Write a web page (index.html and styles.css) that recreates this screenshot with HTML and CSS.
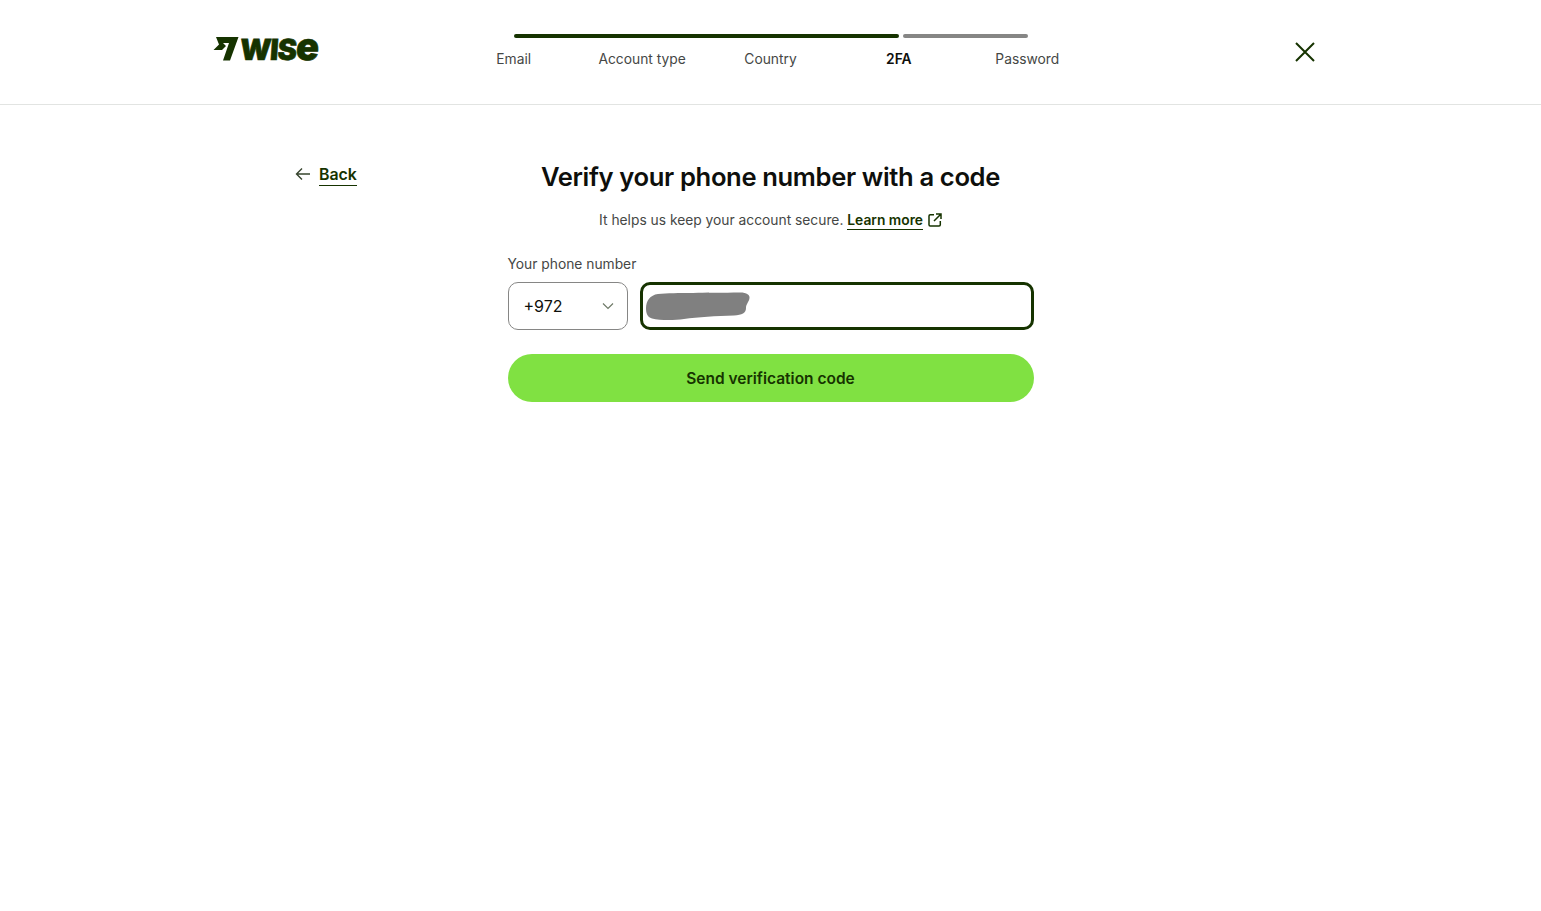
FILE: index.html
```html
<!DOCTYPE html>
<html>
<head>
    <meta charset="UTF-8">
    <meta name="viewport" content="width=device-width, initial-scale=1.0">
    <title>Wise</title>
    <link rel="stylesheet" href="styles.css">
</head>
<body>
    <header class="topbar">
        <a class="logo" href="#">
            <svg class="logo-flag" width="26" height="25" viewBox="0 0 26 25">
                <path d="M3 1H25.5L17 24.5H10L16 7H10L13 10L9 14H0.5L6 8.5Z" fill="#163300"/>
            </svg>
            <span class="logo-word">WIS<span class="logo-e">e</span></span>
        </a>

        <div class="stepper">
            <div class="bars">
                <div class="bar bar-done"></div>
                <div class="bar bar-todo"></div>
            </div>
            <div class="steps">
                <span>Email</span>
                <span>Account type</span>
                <span>Country</span>
                <span class="current">2FA</span>
                <span>Password</span>
            </div>
        </div>

        <button class="close" aria-label="Close">
            <svg width="20" height="20" viewBox="0 0 20 20">
                <path d="M1 1L19 19M19 1L1 19" stroke="#163300" stroke-width="2" fill="none"/>
            </svg>
        </button>
    </header>

    <main class="page">
        <div class="back-col">
            <a class="back" href="#">
                <svg class="back-arrow" width="16" height="14" viewBox="0 0 16 14">
                    <path d="M15 7H2M7 1.5L1.5 7L7 12.5" stroke="#37452e" stroke-width="1.4" fill="none"/>
                </svg>
                <span class="link">Back</span>
            </a>
        </div>

        <div class="form">
            <h1>Verify your phone number with a code</h1>
            <p class="sub">It helps us keep your account secure. <a class="link" href="#">Learn more</a>
                <svg class="ext" width="14" height="14" viewBox="0 0 14 14">
                    <path d="M6 1.7H2.2C1.5 1.7 1 2.2 1 2.9V11.8C1 12.5 1.5 13 2.2 13H11.1C11.8 13 12.3 12.5 12.3 11.8V8M8 1H13V6M13 1L6 8" stroke="#163300" stroke-width="1.5" fill="none"/>
                </svg>
            </p>

            <label class="field-label">Your phone number</label>
            <div class="phone-row">
                <div class="select">
                    <span>+972</span>
                    <svg width="12" height="8" viewBox="0 0 12 8">
                        <path d="M1 1.5L6 6.5L11 1.5" stroke="#6f7a68" stroke-width="1.2" fill="none"/>
                    </svg>
                </div>
                <div class="phone-input">
                    <svg class="scribble" width="104" height="29" viewBox="0 0 104 29">
                        <path d="M12 2C30 0.5 60 1 94 0.5C101 0.5 104 3 103.5 6C103 10 100 12 100 16C100 21 96 23 88 23.5C70 24 52 25 38 27C28 28.5 14 28.5 6 26.5C1 25 0 21 0 16C0 9 4 3 12 2Z" fill="#808080"/>
                    </svg>
                </div>
            </div>

            <button class="send">Send verification code</button>
        </div>
    </main>
</body>
</html>
```

FILE: styles.css
```css
body {
    margin: 0;
    background: #fff;
    font-family: Inter, "Liberation Sans", sans-serif;
    color: #454745;
}

.topbar {
    display: grid;
    grid-template-columns: 1fr 642px 1fr;
    height: 104px;
    padding: 0 213px;
    border-bottom: 1px solid #e2e4e2;
}

.logo {
    display: flex;
    align-items: flex-start;
    gap: 1px;
    padding-top: 32px;
    text-decoration: none;
    color: #163300;
}

.logo-flag {
    margin-top: 4px;
}

.logo-word {
    font-size: 29px;
    line-height: 28px;
    font-weight: 900;
    letter-spacing: -1px;
    -webkit-text-stroke: 0.6px #163300;
    transform: skewX(-4deg);
}

.logo-e {
    font-size: 38px;
    letter-spacing: 0;
}

.stepper {
    padding-top: 34px;
}

.bars {
    display: flex;
    gap: 4px;
    margin: 0 64px;
}

.bar {
    height: 4px;
    border-radius: 2px;
}

.bar-done {
    width: 385px;
    background: #163300;
}

.bar-todo {
    width: 125px;
    background: #868685;
}

.steps {
    display: grid;
    grid-template-columns: repeat(5, 128.4px);
    margin-top: 12px;
    font-size: 13.8px;
    line-height: 18px;
    text-align: center;
    white-space: nowrap;
}

.steps .current {
    color: #0e0f0c;
    font-weight: 600;
}

.close {
    justify-self: end;
    align-self: start;
    margin: 42px 13px 0 0;
    padding: 0;
    border: 0;
    background: none;
    line-height: 0;
}

.page {
    display: grid;
    grid-template-columns: 1fr 526px 1fr;
    padding-top: 55px;
}

.back-col {
    padding: 5px 0 0 295px;
}

.back {
    display: flex;
    align-items: center;
    gap: 8px;
    font-size: 15.9px;
    line-height: 20px;
    font-weight: 600;
    text-decoration: none;
}

.back-arrow {
    margin-top: -3px;
}

.back .link {
    padding-bottom: 0;
}

.link {
    color: #163300;
    font-weight: 600;
    text-decoration: none;
    border-bottom: 1px solid #163300;
    padding-bottom: 1px;
}

.form {
    display: flex;
    flex-direction: column;
}

h1 {
    margin: 0;
    font-size: 25.6px;
    line-height: 34px;
    font-weight: 600;
    letter-spacing: -0.36px;
    color: #0e0f0c;
    text-align: center;
}

.sub {
    margin: 16px 0 0;
    font-size: 13.8px;
    line-height: 20px;
    text-align: center;
}

.ext {
    margin-left: 1px;
    vertical-align: -2px;
}

.field-label {
    margin-top: 24px;
    font-size: 13.8px;
    line-height: 20px;
}

.phone-row {
    display: flex;
    gap: 12px;
    margin-top: 8px;
}

.select {
    display: flex;
    align-items: center;
    justify-content: space-between;
    box-sizing: border-box;
    width: 120px;
    height: 48px;
    padding: 0 13px 0 15px;
    border: 1px solid #868685;
    border-radius: 10px;
    font-size: 16px;
    color: #0e0f0c;
}

.phone-input {
    display: flex;
    align-items: center;
    flex: 1;
    box-sizing: border-box;
    height: 48px;
    padding-left: 3px;
    border: 3px solid #163300;
    border-radius: 10px;
}

.send {
    height: 48px;
    margin-top: 24px;
    border: 0;
    border-radius: 24px;
    background: #80e142;
    color: #163300;
    font-family: inherit;
    font-size: 15.5px;
    font-weight: 600;
}
```
